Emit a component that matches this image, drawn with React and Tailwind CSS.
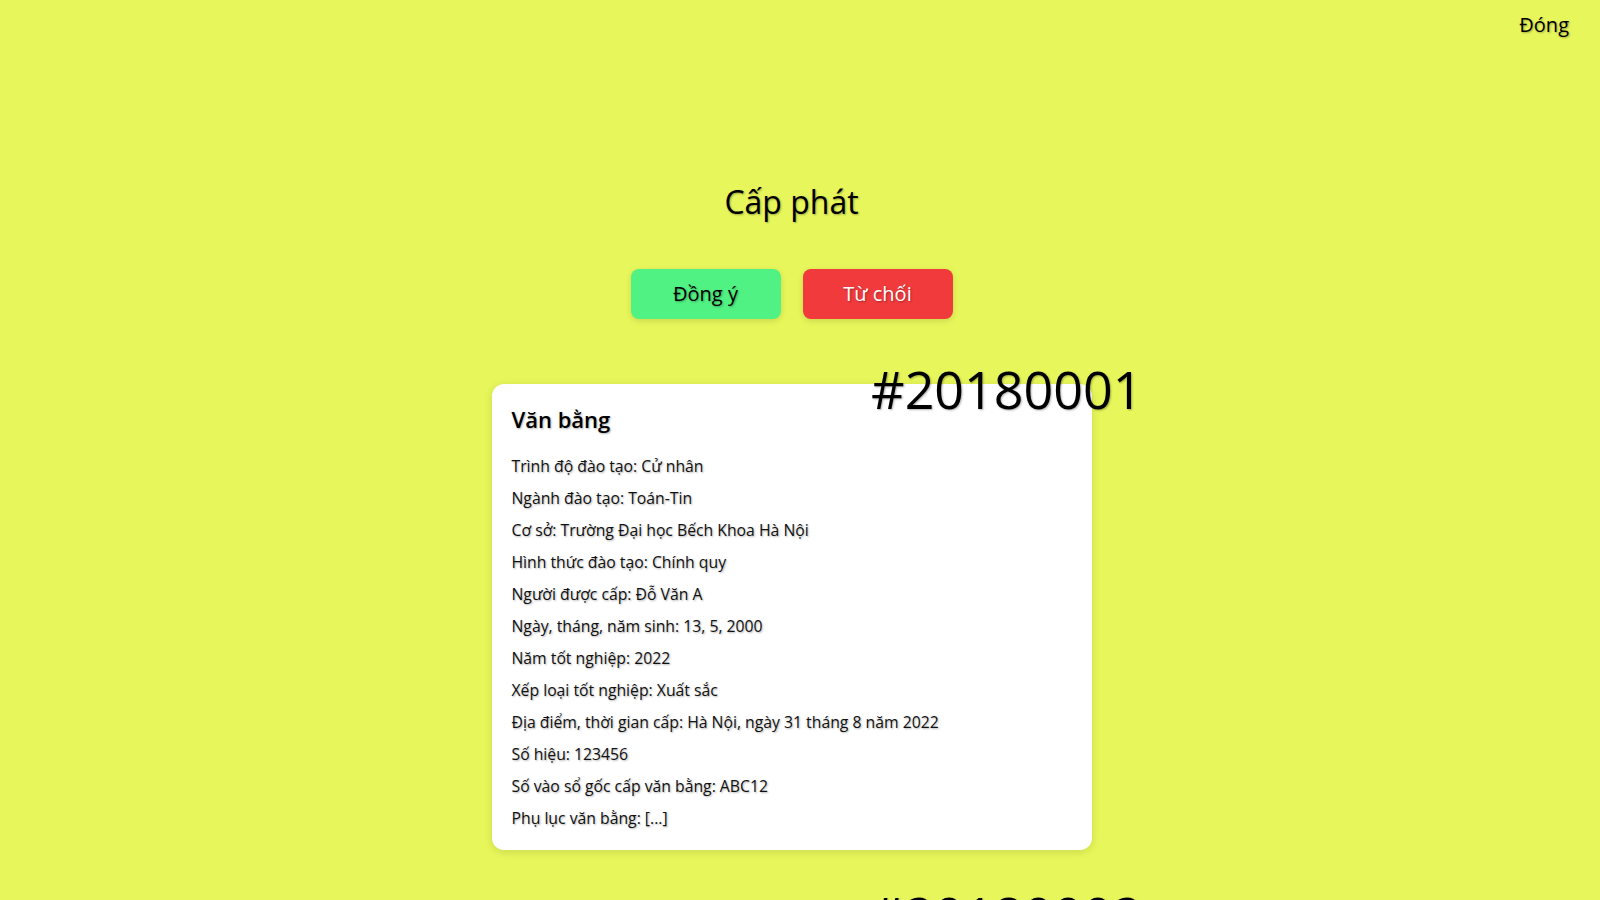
const degrees = [
  {
    id: "20180001",
    fields: [
      ["Trình độ đào tạo", "Cử nhân"],
      ["Ngành đào tạo", "Toán-Tin"],
      ["Cơ sở", "Trường Đại học Bếch Khoa Hà Nội"],
      ["Hình thức đào tạo", "Chính quy"],
      ["Người được cấp", "Đỗ Văn A"],
      ["Ngày, tháng, năm sinh", "13, 5, 2000"],
      ["Năm tốt nghiệp", "2022"],
      ["Xếp loại tốt nghiệp", "Xuất sắc"],
      ["Địa điểm, thời gian cấp", "Hà Nội, ngày 31 tháng 8 năm 2022"],
      ["Số hiệu", "123456"],
      ["Số vào sổ gốc cấp văn bằng", "ABC12"],
      ["Phụ lục văn bằng", "[...]"],
    ],
  },
  {
    id: "20180002",
    fields: [
      ["Trình độ đào tạo", "Cử nhân"],
      ["Ngành đào tạo", "Toán-Tin"],
      ["Cơ sở", "Trường Đại học Bếch Khoa Hà Nội"],
      ["Hình thức đào tạo", "Chính quy"],
      ["Người được cấp", "Nguyễn Văn B"],
      ["Ngày, tháng, năm sinh", "2, 9, 2000"],
      ["Năm tốt nghiệp", "2022"],
      ["Xếp loại tốt nghiệp", "Giỏi"],
      ["Địa điểm, thời gian cấp", "Hà Nội, ngày 31 tháng 8 năm 2022"],
      ["Số hiệu", "123457"],
      ["Số vào sổ gốc cấp văn bằng", "ABC13"],
      ["Phụ lục văn bằng", "[...]"],
    ],
  },
];

const shadowText = "[text-shadow:1px_1px_2px_rgba(0,0,0,0.3)]";

function DegreeCard({ degree }) {
  return (
    <div className="relative w-[600px]">
      <div className="bg-white rounded-xl p-5 shadow-[0_2px_8px_rgba(0,0,0,0.12)]">
        <h3 className={`text-[22px] leading-[31px] font-semibold text-black mb-[19px] ${shadowText}`}>
          Văn bằng
        </h3>
        <div className="space-y-2">
          {degree.fields.map(([label, value]) => (
            <p key={label} className={`text-[15.75px] leading-6 text-[#111] ${shadowText}`}>
              {label}: {value}
            </p>
          ))}
        </div>
      </div>
      <div className={`absolute top-[-21px] right-[-51px] text-[52px] leading-none text-black ${shadowText}`}>
        #{degree.id}
      </div>
    </div>
  );
}

export default function App() {
  return (
    <div className="h-screen overflow-y-scroll bg-[#e7f65a] font-['Open_Sans',sans-serif]">
      {/* leave room for the 17px scrollbar gutter */}
      <div className="mr-[17px] pb-[235px]">
        <div className="flex justify-end px-[14px] pt-[10px]">
          <button className={`text-[20px] leading-[30px] text-black ${shadowText}`}>Đóng</button>
        </div>

        <h1 className={`mt-[138px] text-center text-[32px] leading-[48px] text-black ${shadowText}`}>
          Cấp phát
        </h1>

        <div className="mt-[43px] flex justify-center gap-[22px]">
          <button className={`w-[150px] h-[50px] rounded-lg bg-[#50f283] text-[20px] text-black shadow-[0_2px_6px_rgba(0,0,0,0.12)] ${shadowText}`}>
            Đồng ý
          </button>
          <button className={`w-[150px] h-[50px] rounded-lg bg-[#f03a3c] text-[20px] text-white shadow-[0_2px_6px_rgba(0,0,0,0.12)] ${shadowText}`}>
            Từ chối
          </button>
        </div>

        <div className="mt-[65px] flex flex-col items-center gap-[60px]">
          {degrees.map((d) => (
            <DegreeCard key={d.id} degree={d} />
          ))}
        </div>
      </div>
    </div>
  );
}
